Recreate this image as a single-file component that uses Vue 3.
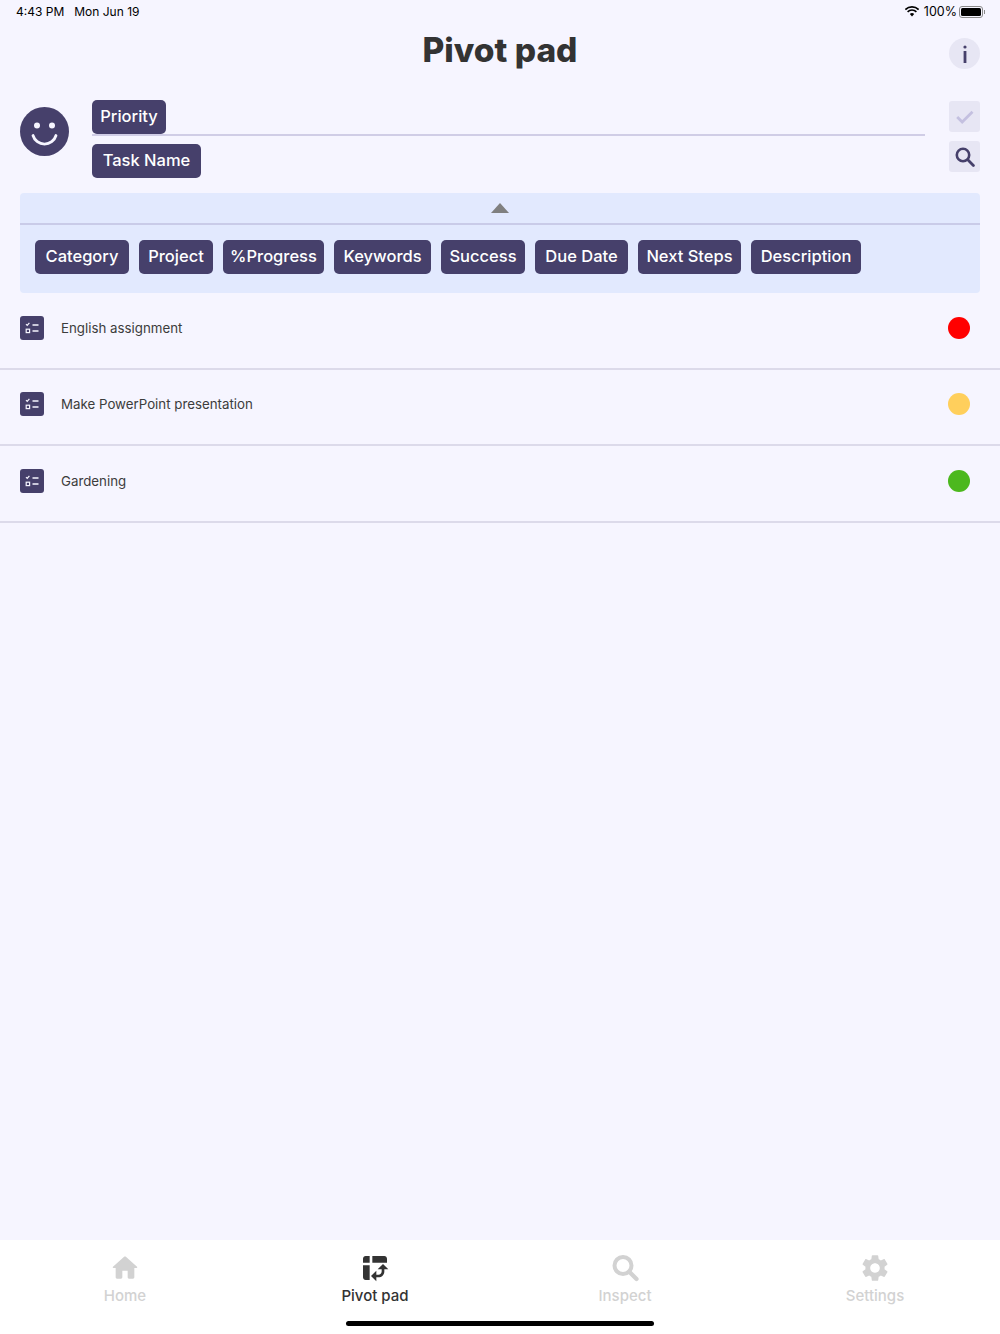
<script setup>
const topChips = [
  { label: 'Category', width: 94 },
  { label: 'Project', width: 74 },
  { label: '%Progress', width: 101 },
  { label: 'Keywords', width: 97 },
  { label: 'Success', width: 84 },
  { label: 'Due Date', width: 93 },
  { label: 'Next Steps', width: 103 },
  { label: 'Description', width: 110 },
]

const tasks = [
  { name: 'English assignment', color: '#ff0000' },
  { name: 'Make PowerPoint presentation', color: '#ffcf5c' },
  { name: 'Gardening', color: '#4cb81e' },
]
</script>

<template>
  <div class="page">
    <div class="statusbar">
      <div class="status-left">
        <span>4:43 PM</span>
        <span>Mon Jun 19</span>
      </div>
      <div class="status-right">
        <svg class="wifi" width="14" height="11" viewBox="0 0 14 11">
          <path d="M0.4 3.6a9.4 9.4 0 0 1 13.2 0" fill="none" stroke="#000" stroke-width="1.6" />
          <path d="M2.6 5.9a6.2 6.2 0 0 1 8.8 0" fill="none" stroke="#000" stroke-width="1.6" />
          <path d="M4.8 8.1a3.1 3.1 0 0 1 4.4 0L7 10.4z" fill="#000" />
        </svg>
        <span>100%</span>
        <div class="battery"><div class="battery-fill"></div></div>
        <div class="battery-cap"></div>
      </div>
    </div>

    <div class="header">
      <div class="header-side"></div>
      <h1 class="title">Pivot pad</h1>
      <div class="header-side">
        <div class="info">
          <svg width="4" height="18" viewBox="0 0 4 18">
            <circle cx="2" cy="2" r="1.6" fill="#46406b" />
            <rect x="0.6" y="6" width="2.8" height="12" fill="#46406b" />
          </svg>
        </div>
      </div>
    </div>

    <div class="query">
      <svg class="smiley" width="49" height="49" viewBox="0 0 49 49">
        <circle cx="24.5" cy="24.5" r="24.5" fill="#46406b" />
        <circle cx="17" cy="18.5" r="3" fill="#f6f5ff" />
        <circle cx="32" cy="18.5" r="3" fill="#f6f5ff" />
        <path d="M13 28.5a12 12 0 0 0 23 0" fill="none" stroke="#f6f5ff" stroke-width="2.8" stroke-linecap="round" />
      </svg>
      <div class="fields">
        <div class="field-line"><span class="chip priority">Priority</span></div>
        <div class="field-low"><span class="chip taskname">Task Name</span></div>
      </div>
      <div class="actions">
        <div class="action">
          <svg width="18" height="14" viewBox="0 0 18 14">
            <path d="M1.2 7l5 5L16.5 1.8" fill="none" stroke="#c4c0e0" stroke-width="2.8" />
          </svg>
        </div>
        <div class="action">
          <svg width="20" height="20" viewBox="0 0 20 20">
            <circle cx="8" cy="8" r="6.2" fill="none" stroke="#46406b" stroke-width="2.6" />
            <path d="M12.8 12.8l5.6 5.6" stroke="#46406b" stroke-width="2.8" stroke-linecap="round" />
          </svg>
        </div>
      </div>
    </div>

    <div class="panel">
      <div class="panel-head"><div class="triangle"></div></div>
      <div class="panel-chips">
        <span v-for="c in topChips" :key="c.label" class="chip" :style="{ width: c.width + 'px' }">{{ c.label }}</span>
      </div>
    </div>

    <div class="tasks">
      <div v-for="t in tasks" :key="t.name" class="task">
        <svg class="task-icon" width="24" height="24" viewBox="0 0 24 24">
          <rect width="24" height="24" rx="3" fill="#46406b" />
          <path d="M6 8.2l1.2 1.2 2.2-2.6" fill="none" stroke="#f6f5ff" stroke-width="1.2" />
          <rect x="6.2" y="13.2" width="3.4" height="3.4" fill="none" stroke="#f6f5ff" stroke-width="1.2" />
          <path d="M12.5 9h6M12.5 15h6" stroke="#f6f5ff" stroke-width="1.6" />
        </svg>
        <span class="task-name">{{ t.name }}</span>
        <span class="dot" :style="{ background: t.color }"></span>
      </div>
    </div>

    <div class="tabbar">
      <div class="tabs">
        <div class="tab">
          <svg width="32" height="32" viewBox="0 0 24 24" fill="#d2d2d2">
            <path d="M10 19v-5h4v5c0 .55.45 1 1 1h3c.55 0 1-.45 1-1v-7h1.7c.46 0 .68-.57.33-.87L12.67 3.6c-.38-.34-.96-.34-1.34 0l-8.36 7.53c-.34.3-.13.87.33.87H5v7c0 .55.45 1 1 1h3c.55 0 1-.45 1-1z" />
          </svg>
          <span>Home</span>
        </div>
        <div class="tab active">
          <svg width="32" height="32" viewBox="0 0 24 24" fill="#333">
            <path d="M10 8h11V5c0-1.1-.9-2-2-2h-9v5zM3 8h5V3H5c-1.1 0-2 .9-2 2v3zm2 13h3V10H3v9c0 1.1.9 2 2 2zm8 1l-4-4 4-4zm1-9l4-4 4 4zm.58 6H13v-2h1.58c1.33 0 2.42-1.08 2.42-2.42V13h2v1.58c0 2.44-1.98 4.42-4.42 4.42z" />
          </svg>
          <span>Pivot pad</span>
        </div>
        <div class="tab">
          <svg width="32" height="32" viewBox="0 0 32 32">
            <circle cx="14" cy="13.5" r="8.5" fill="none" stroke="#d2d2d2" stroke-width="4" />
            <path d="M20.5 20l7 7" stroke="#d2d2d2" stroke-width="4.2" stroke-linecap="round" />
          </svg>
          <span>Inspect</span>
        </div>
        <div class="tab">
          <svg width="32" height="32" viewBox="0 0 24 24" fill="#d2d2d2">
            <path d="M19.14 12.94c.04-.3.06-.61.06-.94 0-.32-.02-.64-.07-.94l2.03-1.58c.18-.14.23-.41.12-.61l-1.92-3.32c-.12-.22-.37-.29-.59-.22l-2.39.96c-.5-.38-1.03-.7-1.62-.94l-.36-2.54c-.04-.24-.24-.41-.48-.41h-3.84c-.24 0-.43.17-.47.41l-.36 2.54c-.59.24-1.13.57-1.62.94l-2.39-.96c-.22-.08-.47 0-.59.22L2.74 8.87c-.12.21-.08.47.12.61l2.03 1.58c-.05.3-.09.63-.09.94s.02.64.07.94l-2.03 1.58c-.18.14-.23.41-.12.61l1.92 3.32c.12.22.37.29.59.22l2.39-.96c.5.38 1.03.7 1.62.94l.36 2.54c.05.24.24.41.48.41h3.84c.24 0 .44-.17.47-.41l.36-2.54c.59-.24 1.13-.56 1.62-.94l2.39.96c.22.08.47 0 .59-.22l1.92-3.32c.12-.22.07-.47-.12-.61l-2.01-1.58zM12 15.6c-1.98 0-3.6-1.62-3.6-3.6s1.62-3.6 3.6-3.6 3.6 1.62 3.6 3.6-1.62 3.6-3.6 3.6z" />
          </svg>
          <span>Settings</span>
        </div>
      </div>
      <div class="home-bar"></div>
    </div>
  </div>
</template>

<style>
html, body {
  margin: 0;
  background: #f6f5ff;
}
</style>

<style scoped>
.page {
  height: 1334px;
  display: flex;
  flex-direction: column;
  background: #f6f5ff;
  font-family: Inter, "Liberation Sans", sans-serif;
  color: #333;
  overflow: hidden;
}

.statusbar {
  height: 23px;
  padding: 0 15px 0 16px;
  margin-bottom: 1px;
  display: flex;
  justify-content: space-between;
  align-items: center;
  font-size: 12px;
  color: #000;
}
.status-left {
  display: flex;
  gap: 10px;
}
.status-right {
  display: flex;
  align-items: center;
  font-size: 12.5px;
}
.wifi {
  margin-right: 5px;
}
.battery {
  width: 24px;
  height: 12px;
  margin-left: 2px;
  box-sizing: border-box;
  border: 1px solid #8a8a8a;
  border-radius: 3px;
  padding: 1px;
}
.battery-fill {
  height: 100%;
  background: #000;
  border-radius: 1.5px;
}
.battery-cap {
  width: 1px;
  height: 4px;
  margin-left: 1px;
  background: #8a8a8a;
}

.header {
  height: 76px;
  padding: 0 20px;
  display: flex;
  align-items: flex-start;
  justify-content: space-between;
}
.header-side {
  width: 31px;
  padding-top: 14px;
}
.title {
  margin: 4px 0 0;
  font-size: 33.5px;
  line-height: 44px;
  font-weight: 800;
  color: #333;
}
.info {
  width: 31px;
  height: 31px;
  border-radius: 50%;
  background: #e7e6f4;
  display: flex;
  align-items: center;
  justify-content: center;
}

.query {
  padding: 0 20px;
  display: flex;
  align-items: flex-start;
}
.smiley {
  margin-top: 7px;
  flex: none;
}
.fields {
  flex: 1;
  margin-left: 23px;
  margin-right: 24px;
}
.field-line {
  height: 36px;
  border-bottom: 2px solid #d0cde6;
  box-sizing: border-box;
}
.field-low {
  margin-top: 8px;
}
.actions {
  width: 31px;
  padding-top: 1px;
  display: flex;
  flex-direction: column;
  gap: 9px;
}
.action {
  width: 31px;
  height: 31px;
  border-radius: 3px;
  background: #e7e6f4;
  display: flex;
  align-items: center;
  justify-content: center;
}

.chip {
  display: inline-flex;
  align-items: center;
  justify-content: center;
  height: 34px;
  box-sizing: border-box;
  padding-bottom: 2px;
  border-radius: 5px;
  background: #46406b;
  color: #fff;
  font-size: 16.5px;
  font-weight: 500;
  white-space: nowrap;
  flex: none;
}
.priority {
  width: 74px;
}
.taskname {
  width: 109px;
}

.panel {
  margin: 15px 20px 0;
  height: 100px;
  border-radius: 4px;
  background: #e2e9fe;
}
.panel-head {
  height: 32px;
  box-sizing: border-box;
  border-bottom: 2px solid #c9cbe8;
  display: flex;
  align-items: center;
  justify-content: center;
}
.triangle {
  width: 0;
  height: 0;
  border-left: 9px solid transparent;
  border-right: 9px solid transparent;
  border-bottom: 10px solid #808080;
}
.panel-chips {
  padding: 15px 15px 0;
  display: flex;
  gap: 10px;
}

.tasks {
  flex: 1;
}
.task {
  height: 76.5px;
  box-sizing: border-box;
  padding: 0 30px 5px 20px;
  display: flex;
  align-items: center;
  border-bottom: 2px solid #dcdaea;
}
.task-icon {
  flex: none;
}
.task-name {
  flex: 1;
  margin-left: 17px;
  font-size: 13.3px;
  color: #3c3c3c;
}
.dot {
  width: 22px;
  height: 22px;
  border-radius: 50%;
}

.tabbar {
  height: 94px;
  background: #fff;
}
.tabs {
  display: grid;
  grid-template-columns: repeat(4, 1fr);
  padding-top: 12px;
}
.tab {
  display: flex;
  flex-direction: column;
  align-items: center;
  font-size: 15px;
  font-weight: 500;
  color: #d2d2d2;
}
.tab span {
  line-height: 24px;
}
.tab.active {
  color: #333;
}
.home-bar {
  width: 308px;
  height: 5px;
  margin: 13px auto 0;
  background: #000;
  border-radius: 3px;
}
</style>
